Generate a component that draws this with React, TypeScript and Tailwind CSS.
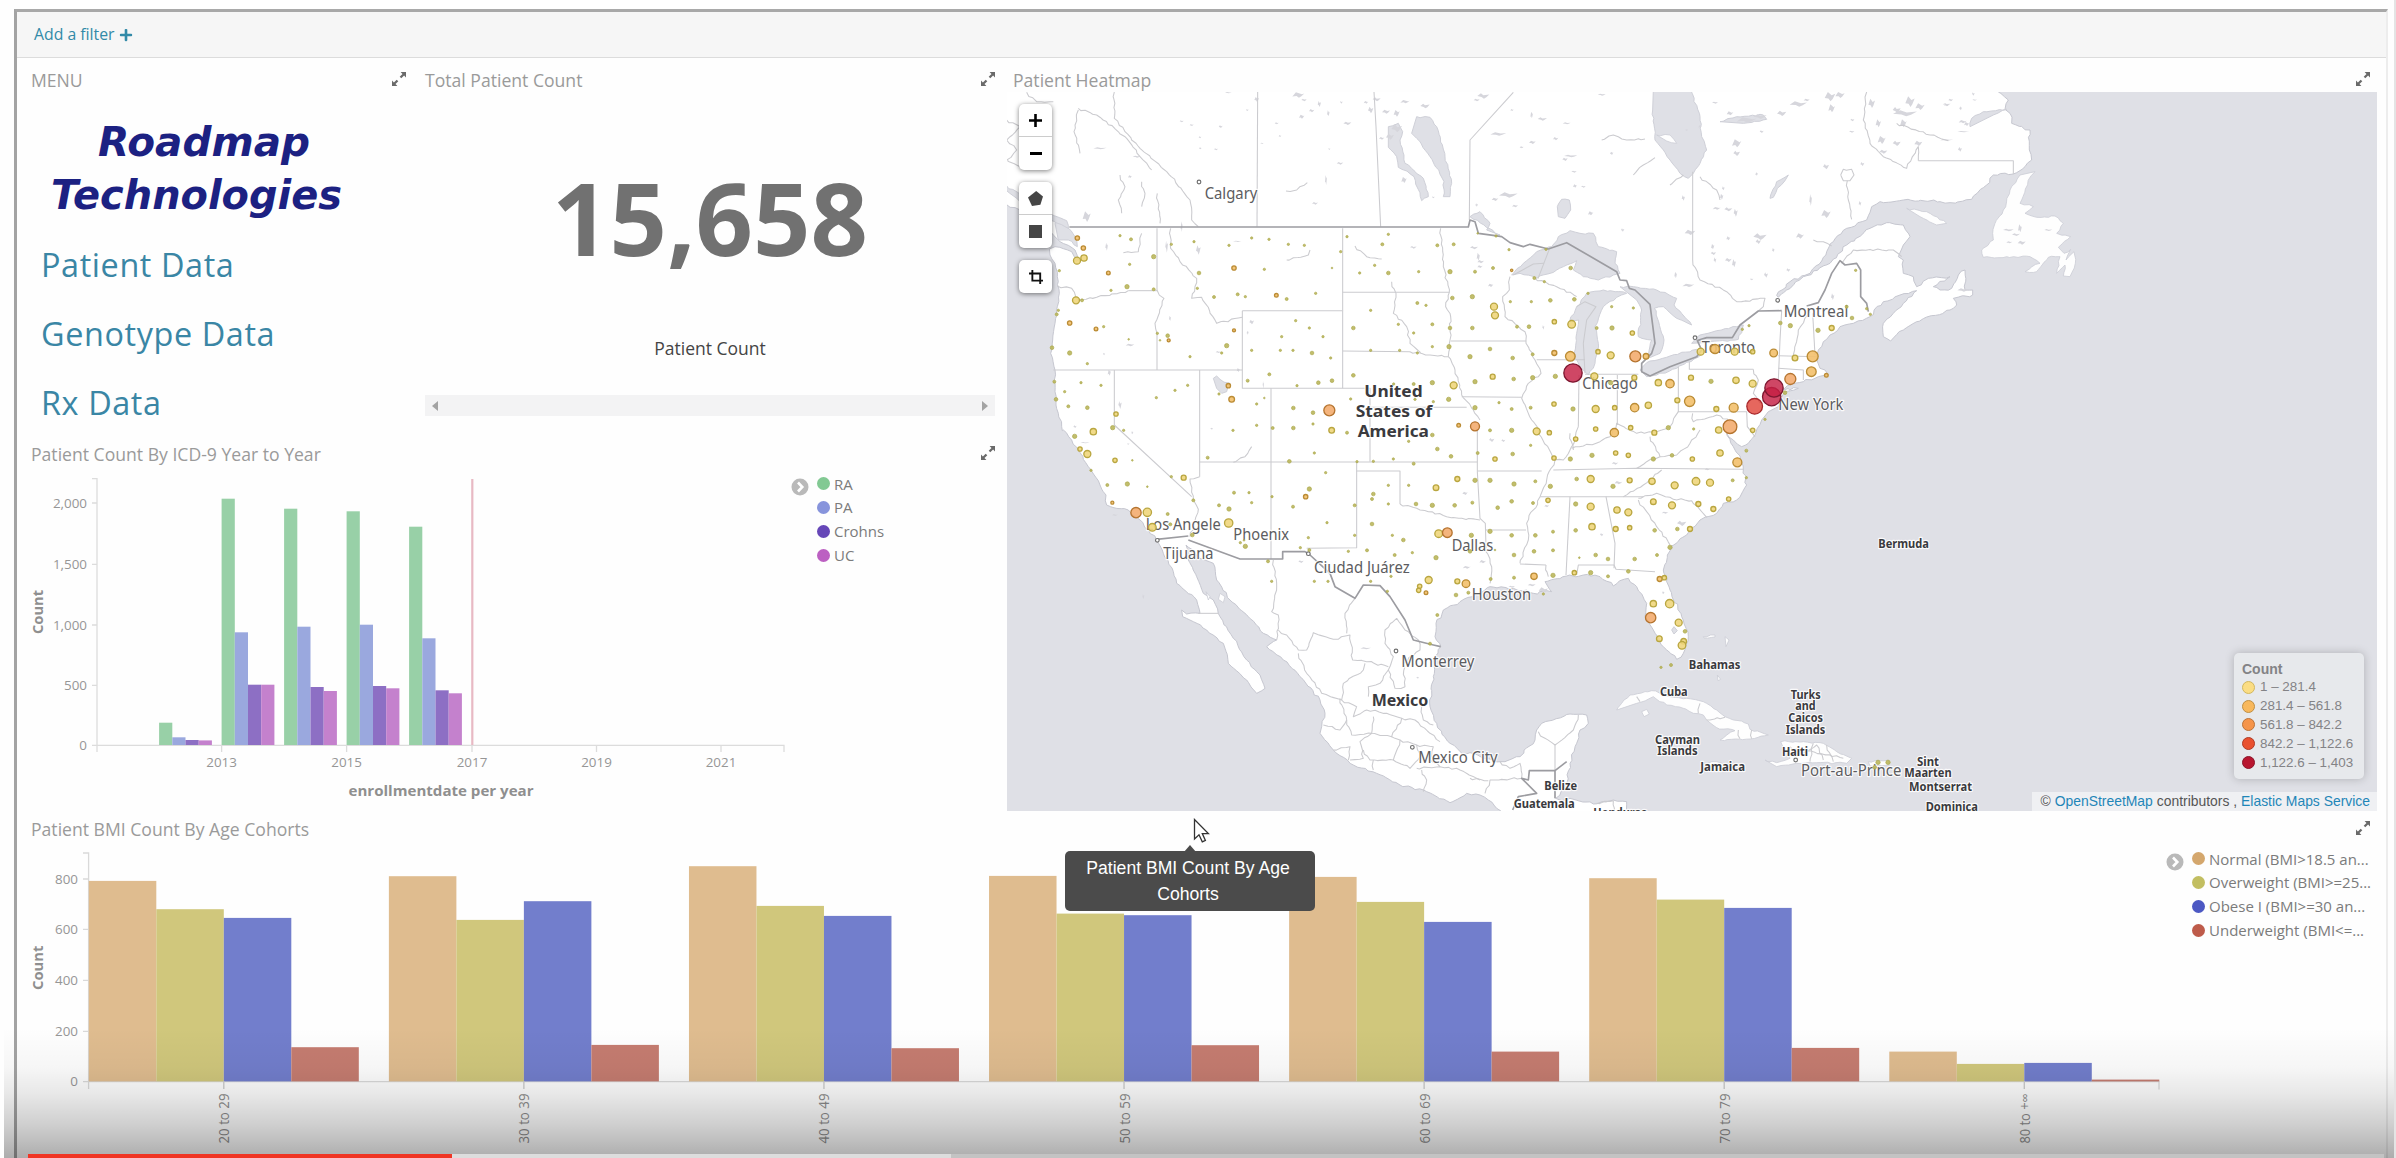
import React from "react";
import { FaPlus } from "react-icons/fa";

/* ---------- Geometry helpers ---------- */

// The map is digitised on five sheets, each with its own origin.
type Sheet = "NW" | "N" | "NE" | "SW" | "S" | "SE";
const ORIGIN: Record<Sheet, [number, number]> = {
  NW: [0, 0],
  N: [1410, 0],
  NE: [2820, 0],
  SW: [0, 1110],
  S: [1410, 1110],
  SE: [2700, 1110],
};

type Run = [Sheet, string];

const trace = (...runs: Run[]) =>
  "M" +
  runs
    .map(([sheet, points]) =>
      points
        .trim()
        .split(/\s+/)
        .map((p) => {
          const [x, y] = p.split(",").map(Number);
          return `${x + ORIGIN[sheet][0]} ${y + ORIGIN[sheet][1]}`;
        })
        .join("L")
    )
    .join("L");

const closed = (...runs: Run[]) => trace(...runs) + "Z";

// Adds a small, repeatable wobble so that natural borders look irregular.
const wiggle = (d: string, amount: number) => {
  const pts = d
    .replace(/[MZ]/g, "")
    .split("L")
    .map((p) => p.split(" ").map(Number));
  const out: string[] = [];
  let seed = 7;
  const rnd = () => {
    seed = (seed * 16807) % 2147483647;
    return (seed / 2147483647 - 0.5) * 2 * amount;
  };
  pts.forEach(([x, y], i) => {
    out.push(`${x} ${y}`);
    const next = pts[i + 1];
    if (!next) return;
    const len = Math.hypot(next[0] - x, next[1] - y);
    if (len > 900) return;
    const n = Math.floor(len / 11);
    for (let k = 1; k < n; k++) {
      const t = k / n;
      out.push(`${(x + (next[0] - x) * t + rnd()).toFixed(1)} ${(y + (next[1] - y) * t + rnd()).toFixed(1)}`);
    }
  });
  return "M" + out.join("L") + (d.endsWith("Z") ? "Z" : "");
};

/* ---------- Map data ---------- */

const OCEANS = [
  wiggle(
    trace(
      ["NW", "20,434 60,450 100,475 140,508 180,545 205,556 225,570 236,600 228,604 215,575 190,566 165,560 148,567 150,585 165,610 172,650 178,700 172,740 165,790 158,840 152,880 165,930 163,960 168,1020 175,1060 185,1100 187,1112"],
      ["SW", "190,0 215,30 235,60 265,110 300,165 318,195 320,225 385,240 420,270 445,300 470,330 490,370 520,425 530,460 590,510 600,550 560,552 545,540 548,560 580,575 620,600 670,640 685,700 740,750 770,790 795,775 780,735 740,690 700,625 660,560 640,510 610,490 590,440 565,390 558,345 600,385 640,400 650,450 690,510 745,560 790,610 830,630 800,650 850,690 900,740 960,810 975,850 965,890 960,910 1000,960 1060,1005 1130,1030 1200,1065 1280,1085 1350,1118 1400,1090 1440,1095"],
      ["S", "55,1110 80,1135 100,1150"]
    ),
    3
  ) + "L1510 2262L15 2262L15 434Z",
  wiggle(
    trace(
      ["S", "475,1150 470,1115 430,1110 370,1122 300,1105 275,1112 257,1105 275,1080 290,1060 300,1000 320,940 330,900 355,880 350,855 300,852 215,880 200,900 195,930 150,980 90,995 40,985 0,968"],
      ["SW", "1390,975 1350,940 1310,880 1290,830 1300,740 1300,690 1322,650 1305,620 1308,580 1330,540 1380,515 1440,490"],
      ["S", "60,470 130,475 190,490 245,485 225,455 290,438 340,435 390,440 430,468 475,445 500,470 530,520 525,560 550,600 580,650 620,688 640,670 655,620 635,560 600,480 580,420 600,350 650,315 690,270 740,250 760,220 800,210 830,165 820,120 812,90 790,50 770,10 790,30 815,50 835,40 860,0"],
      ["N", "862,1105 875,1080 895,1055 925,1040 940,1002 985,985 930,992 960,975 1000,965 1045,950 1075,945 1065,930 1050,925 1040,900 1045,870 1060,845 1080,825 1110,800 1150,790 1200,770 1240,725 1290,705 1340,692 1300,730 1270,760 1240,790 1240,830 1262,843 1300,810 1340,785 1440,750"],
      ["NE", "50,735 40,715 98,705 98,690 75,690 75,630 55,645 35,685 0,690"],
      ["N", "1390,680 1440,650 1375,655 1340,680 1330,650 1300,640 1300,600 1285,590 1300,555 1320,530 1300,495 1250,488 1200,505 1130,555 1080,610 1000,650 950,690 925,712 920,706 960,665 1020,640 1060,592 1090,545 1130,505 1190,480 1205,440 1230,425 1300,420 1410,425"],
      ["NE", "30,428 95,418 140,375 160,345 220,342 255,320 275,300 268,270 270,210 215,190 210,160 195,148 205,120 175,96"]
    ),
    4
  ) + "L3005 86L4140 86L4140 2262L1885 2262Z",
];

const LAKES = [
  closed(["N", "125,645 160,610 200,575 245,560 265,530 300,512 330,520 370,520 385,560 440,575 435,610 450,640 430,645 385,660 340,650 310,630 320,602 260,630 200,655 150,640"]),
  closed(["N", "340,930 312,890 320,820 326,780 300,780 320,740 350,700 400,690 470,700 440,712 400,740 375,800 385,850 375,910 355,945"]),
  closed(["N", "450,680 490,680 560,690 620,715 612,735 665,795 620,775 580,740 553,745 582,840 570,880 530,895 545,840 505,830 515,750 500,720"]),
  closed(["N", "510,930 530,908 600,888 680,868 692,885 620,925 560,945 530,950"]),
  closed(["N", "665,850 690,825 740,812 800,800 820,795 805,838 700,848"]),
  closed(["N", "550,90 662,90 690,170 695,230 710,270 690,310 670,340 655,355 630,340 600,300 555,240 548,150"]),
  closed(["NW", "1250,170 1290,172 1310,200 1335,290 1355,370 1350,410 1330,410 1332,365 1290,290 1250,235 1235,220"]),
  closed(["NW", "1165,200 1195,190 1208,215 1200,240 1215,310 1270,355 1285,410 1265,422 1242,350 1195,322 1190,290 1165,262"]),
  closed(["N", "262,440 275,418 298,420 302,450 285,475 265,470"]),
  closed(["NW", "640,955 650,948 660,958 690,970 680,995 665,1000 650,985"]),
  closed(["NW", "165,490 185,475 225,530 232,560 205,540 175,540"]),
  closed(["NW", "20,378 60,402 130,452 200,482 205,505 150,480 60,425 20,392"]),
  closed(["N", "90,525 0,470 30,455 60,490 50,510"]),
  closed(["N", "900,415 920,365 955,345 945,362 922,385 910,412"]),
  closed(["S", "605,600 612,590 622,602 612,612"]),
  closed(["NE", "90,200 95,175 130,155 200,148 160,165"]),
  closed(["N", "750,185 800,170 880,165 890,178 820,190"]),
];

const ISLANDS = [
  closed(["NE", "285,335 270,352 240,430 280,440 255,460 290,472 345,468 370,490 350,520 392,530 355,562 372,580 392,568 378,600 402,575 406,610 390,650 370,648 375,615 350,640 360,590 325,592 290,635 255,635 300,610 270,590 200,590 130,592 125,570 160,540 158,520 165,490 190,450 210,390 240,345"]),
  closed(["N", "1310,445 1370,455 1430,490 1400,495 1350,470"]),
  closed(["N", "560,225 600,225 620,250 590,243"]),
  closed(["S", "440,840 455,820 480,795 545,782 600,800 650,805 700,815 740,840 765,860 790,870 835,882 840,898 895,915 840,927 750,930 795,902 740,893 710,870 700,855 670,850 640,835 590,825 550,800 500,820"]),
  closed(["S", "885,990 920,998 960,985 932,935 1000,935 1060,940 1100,965 1145,985 1130,1000 1040,998 980,1000 920,1010"]),
  closed(["S", "1195,995 1255,990 1258,1005 1200,1008"]),
  closed(["S", "515,845 530,838 538,852 522,860"]),
  closed(["S", "700,1000 740,995 790,1010 740,1016"]),
  closed(["S", "700,620 735,615 735,621 702,624"]),
  closed(["S", "765,620 777,630 768,650"]),
  closed(["S", "742,735 752,748 744,752"]),
  closed(["SW", "660,490 675,500 670,518 655,508"]),
  closed(["SW", "618,485 630,500 625,510"]),
];

const STRAIGHT_BORDERS = [
  trace(["NW", "773,96 771,500"]),
  trace(["NW", "1122,96 1128,200 1142,500"]),
  trace(["N", "130,97 0,240 -2,480"]),
  trace(["NW", "471,505 471,690"]),
  trace(["NW", "471,820 471,930"]),
  trace(["NW", "385,692 471,692"]),
  trace(["NW", "160,930 727,930"]),
  trace(["NW", "727,752 1028,752 1028,985 727,985 727,752"]),
  trace(["NW", "1028,505 1028,752"]),
  trace(["NW", "1028,697 1348,697"]),
  trace(["NW", "1028,873 1230,875"]),
  trace(["NW", "1352,843 1440,843"], ["N", "168,843"]),
  trace(["NW", "813,985 813,1497"]),
  trace(["NW", "343,930 343,1095 575,1310"]),
  trace(["NW", "599,930 599,1250"]),
  trace(["NW", "1028,985 1110,985 1110,1205"]),
  trace(["NW", "1110,1042 1400,1042"]),
  trace(["NW", "599,1206 1432,1206"]),
  trace(["NW", "1385,1010 1565,1012"]),
  trace(["SW", "1070,96 1070,353 920,355"]),
  trace(["SW", "1070,123 1200,123 1200,222"]),
  trace(["N", "200,899 345,899"]),
  trace(["N", "327,945 325,1100"]),
  trace(["N", "442,945 442,1095"]),
  trace(["N", "345,943 505,943"]),
  trace(["N", "625,920 625,1055 830,1055 832,1100 855,1130"]),
  trace(["N", "658,905 658,928 850,928"]),
  trace(["S", "250,120 500,115 820,118"]),
  trace(["S", "22,123 215,123"]),
  trace(["S", "210,200 520,200"]),
  trace(["S", "300,200 288,435"]),
  trace(["S", "408,200 435,340 432,415"]),
  trace(["S", "320,435 325,405 432,405 438,418 555,425"]),
  trace(["S", "48,300 168,300"]),
  trace(["S", "22,0 22,125 30,265 46,280 48,350"]),
  trace(["S", "150,402 228,405"]),
  trace(["N", "935,752 930,840 925,960"]),
  trace(["N", "1028,760 1035,885"]),
  trace(["N", "925,887 1040,890"]),
  trace(["N", "925,925 1000,930 1000,960"]),
  trace(["N", "668,335 668,600"]),
  trace(["N", "1345,302 1440,302"], ["NE", "220,302 220,342"]),
  trace(["S", "255,945 255,1022"]),
  trace(["SW", "595,550 655,550"]),
  trace(["N", "204,656 240,562"]),
  trace(["N", "130,645 190,612 222,610"]),
  trace(["N", "345,940 340,850 350,780 378,740 345,725 320,740"]),
];

const NATURAL_BORDERS = [
  trace(["NW", "343,96 343,175 375,215 420,265 500,335 570,420 575,480 595,500"]),
  trace(["NW", "471,690 492,715 465,790 471,820"]),
  trace(["NW", "172,678 215,685 235,720 290,712 385,692"]),
  trace(["NW", "512,505 512,565 540,605 590,655 575,715 605,712 650,790 727,772"]),
  trace(["NW", "1230,875 1290,885 1345,890 1365,930 1385,1005 1420,1050 1440,1080"]),
  trace(["NW", "1322,505 1330,620 1348,697 1337,740 1352,770 1350,840 1345,890"]),
  trace(["NW", "1175,665 1188,700 1180,760 1220,800 1230,850 1262,878"]),
  trace(["SW", "599,140 570,147 580,210 595,238 570,320"]),
  trace(["SW", "1200,222 1250,235 1340,260 1440,270"]),
  trace(["N", "120,650 118,690 98,710 105,770 165,815 168,850 195,900 213,940 175,970 155,1015 185,1080 205,1110"], ["S", "205,10 255,90 230,150 210,200 170,280 175,330 150,400"]),
  trace(["S", "228,405 235,440"]),
  trace(["N", "195,655 260,680 320,710"]),
  trace(["N", "325,1100 315,1140"], ["S", "300,60 280,90 252,90"]),
  trace(["N", "625,1055 600,1100 560,1115 500,1120 440,1090 420,1130"], ["S", "390,35 340,48 305,55"]),
  trace(["S", "540,20 570,80 620,75 660,40 690,0"]),
  trace(["S", "570,80 530,95 500,115"]),
  trace(["S", "575,120 520,165 460,200"]),
  trace(["S", "505,205 560,190 610,208 665,212 710,262"]),
  trace(["S", "505,210 530,245 560,290 600,345"]),
  trace(["S", "48,350 65,410 60,460"]),
  trace(["N", "1020,755 985,810 970,885"]),
  trace(["N", "850,928 865,960 850,1000 870,1030"]),
  trace(["N", "668,1060 670,1085 740,1065 780,1085"]),
  trace(["N", "668,600 690,660 770,695 800,725 885,715 880,740 865,753"]),
  trace(["N", "1190,96 1180,180 1200,250 1240,290 1310,325 1345,260 1345,302"]),
  trace(["N", "1115,610 1150,570 1270,570 1295,590"]),
  trace(["N", "690,350 740,390 750,420"]),
  trace(["N", "1132,362 1135,420 1145,478"]),
  trace(["N", "1112,345 1120,328 1145,328 1152,345 1140,362 1120,362 1112,345"]),
  trace(["SW", "820,390 830,470 815,545 835,555 830,630"]),
  trace(["SW", "835,600 860,615 895,660 920,660 940,608 1000,628 1050,615 1058,690 1100,695 1165,710"]),
  trace(["SW", "1065,505 1035,550 1040,610"]),
  trace(["SW", "895,670 920,730 965,790 1025,810 1030,760 1090,720 1095,700"]),
  trace(["SW", "1190,565 1155,600 1155,640 1180,680 1165,720 1185,775 1215,770 1210,700 1260,660 1255,630 1215,600 1190,565"]),
  trace(["SW", "1165,720 1140,760 1105,770 1105,800"]),
  trace(["SW", "1020,805 1040,870 1020,900 970,885"]),
  trace(["SW", "1025,810 1070,830 1060,860 1100,840 1160,850 1205,865 1175,920 1115,910 1120,860"]),
  trace(["SW", "1040,870 1055,915 1115,910 1080,935 1090,985 1050,990"]),
  trace(["SW", "1000,960 1050,950 1045,990"]),
  trace(["SW", "1090,960 1110,990 1180,990 1200,930 1175,920"]),
  trace(["SW", "1205,865 1245,870 1290,910 1320,935"]),
  trace(["SW", "1200,930 1250,945 1260,980 1230,1015 1180,990"]),
  trace(["SW", "1120,990 1120,1020"]),
  trace(["SW", "1265,1020 1280,1050 1270,1085"]),
  trace(["SW", "1250,1015 1320,1010 1380,1020 1440,1050"]),
  trace(["SW", "1250,945 1300,950 1290,990 1320,1010"]),
  trace(["SW", "1265,830 1270,870 1300,885"]),
  trace(["S", "205,905 225,925 255,945 310,900 325,855"]),
  trace(["S", "90,995 120,1015 150,1000 155,1045 60,1050 45,1090"]),
  trace(["S", "0,1045 55,1052"]),
  trace(["S", "500,800 510,815"]),
  trace(["S", "690,820 685,850"]),
  trace(["S", "765,862 710,870"]),
  trace(["S", "805,900 810,926"]),
  trace(["S", "845,900 845,926"]),
  trace(["S", "960,950 1000,970 1040,945 1060,990"]),
  trace(["S", "1030,940 1020,995"]),
  trace(["S", "1070,945 1090,995"]),
  trace(["S", "1000,960 1120,985"]),
  trace(["S", "380,1120 430,1112 432,1145"]),
  trace(["NW", "235,145 290,165 380,235 420,290 455,330"]),
  trace(["NW", "235,150 222,215 240,280"]),
  trace(["NW", "360,345 375,380 355,420 365,460"]),
  trace(["NW", "425,365 435,400 425,440"]),
  trace(["NW", "472,400 480,490"]),
  trace(["NW", "858,393 890,390 922,368"]),
  trace(["NW", "20,180 60,200 20,240 50,270 20,300 60,320"]),
  trace(["NW", "80,97 110,125 160,125"]),
  trace(["NW", "860,600 925,585 930,570"]),
  trace(["NW", "1065,558 1100,590 1145,597"]),
  trace(["NW", "425,520 415,575 370,578"]),
  trace(["N", "490,345 520,315 555,293"]),
  trace(["N", "395,240 430,225 470,240 525,237"]),
  trace(["N", "600,375 640,345"]),
  trace(["N", "1030,540 1060,545 1085,558"]),
  trace(["N", "1280,190 1380,225 1435,242"]),
  trace(["S", "300,10 310,60"]),
  trace(["SW", "700,97 735,80 755,50"]),
];

const NATIONAL_BORDERS = [
  trace(
    ["NW", "208,501 1405,501 1410,480 1425,485 1435,520"],
    ["N", "75,527 95,530 120,548 160,560 180,553 235,567 290,548 440,635 450,660 470,662 478,685 495,690 540,733 555,850 545,880 515,910 515,935 540,948 600,920 680,890 695,870 682,842 710,833 787,833 810,795 865,753 935,752"]
  ),
  trace(["N", "1010,738 1045,728 1065,690 1085,640 1110,602 1125,615 1160,610 1172,630 1172,710 1190,730 1195,755"]),
  trace(["SW", "470,328 565,318"]),
  trace(["SW", "565,330 720,387 848,387 848,365 915,365 930,375 990,430 1005,470 1065,505 1090,465 1140,467 1170,500 1215,570 1240,630 1300,645 1322,650"]),
  trace(["S", "255,1105 255,1022 178,1022 175,1050 155,1045 200,1090 145,1100 128,1140"]),
  trace(["S", "255,1022 290,995"]),
];

// Small northern lakes: x, y, half width, half height.
const SPECKS: [Sheet, string][] = [
  ["NW", "545,184,6,3 575,195,6,3 662,200,6,4 600,232,4,3 601,265,4,3 648,268,6,3 742,150,4,3 770,118,7,7 685,98,10,2 895,105,18,8 912,120,8,4 958,132,5,9 935,152,8,5 985,160,4,9 905,170,8,6 1024,127,4,4 1042,190,12,5 830,190,6,3 840,228,4,3 786,250,5,2 988,267,3,3 1020,310,10,4 945,430,9,4 978,360,3,15 1098,127,7,4 1130,118,12,6 1112,150,8,10 1158,155,12,6 1190,160,9,10 1215,125,14,5 1275,138,14,7 1190,205,16,12 1170,230,12,9 1145,235,8,4 1212,360,8,9 1300,412,4,3 300,265,20,3 410,290,12,3 260,470,12,16 390,350,6,4 500,560,4,18 595,570,7,14 320,560,4,12 545,500,3,16 712,544,13,2 1240,562,10,4 755,786,7,7 743,818,3,6 390,855,13,4 328,938,5,9 360,1035,5,12 312,882,3,4 225,1100,5,4 510,775,3,8 715,930,5,6 790,975,2,12 655,876,8,3 635,1106,4,3 397,1118,3,5 1435,590,5,12 "],
  ["N", "40,108,18,8 20,120,9,4 85,222,24,5 126,150,5,3 185,165,4,10 217,177,14,5 290,190,12,3 257,236,8,5 187,247,10,5 155,262,6,3 302,288,20,4 285,298,8,5 312,335,8,3 425,280,5,5 315,378,6,5 340,380,7,3 115,405,28,8 135,438,9,4 75,418,10,5 362,460,8,6 458,510,5,5 20,435,4,5 32,605,10,5 30,620,8,4 62,676,8,5 12,563,12,5 395,104,12,3 735,128,9,3 780,160,10,6 830,180,30,8 870,170,20,7 935,160,14,8 985,132,26,8 1010,120,9,4 800,250,14,12 800,280,10,8 875,215,6,4 1080,110,16,14 1110,105,14,9 1085,145,10,12 1147,180,6,4 1145,215,8,3 1205,130,10,14 1225,190,8,12 1235,240,12,12 1280,150,12,9 1305,160,36,9 1320,125,14,16 1350,140,14,10 1300,190,10,12 1280,250,12,8 1240,275,12,6 1345,250,12,8 1430,135,8,4 860,342,4,5 1068,320,9,8 1177,312,6,6 1022,420,4,18 1068,462,14,12 990,528,12,8 870,530,20,10 865,545,8,7 760,385,4,6 755,410,5,9 740,445,12,4 775,448,12,6 797,458,6,12 660,517,16,8 775,535,6,6 728,560,5,8 730,580,8,5 735,600,4,8 775,600,10,6 792,610,6,12 910,570,4,6 888,645,6,8 955,630,6,5 640,414,5,8 617,645,4,10 655,676,18,5 845,658,5,3 220,802,3,7 1088,710,5,10 1170,430,4,7 690,200,5,4 650,210,4,3 "],
  ["NE", "20,133,12,3 32,120,7,4 62,145,4,6 68,185,12,5 80,192,8,6 100,102,4,5 104,120,7,2 60,268,6,7 20,240,20,2 70,215,18,2 205,510,16,4 228,524,12,4 245,548,12,6 208,547,9,3 240,505,6,12 325,510,12,3 70,690,18,5 "],
  ["SW", "903,395,8,4 1097,655,16,3 1253,743,4,3 1395,190,8,5 1400,412,12,4 255,38,14,2 430,500,3,8 345,255,9,3 385,42,4,2 "],
  ["S", "65,30,8,6 100,32,6,4 435,100,10,4 445,158,12,5 585,248,10,3 635,280,14,8 395,314,5,5 230,228,7,4 38,395,10,5 580,488,4,4 125,470,10,3 185,465,12,4 220,480,14,8 712,118,8,3 "],
];

const DOTS: [Sheet, string][] = [
  ["NW", "232,534,8,o 250,564,8,o 231,602,12 252,594,11 325,639,7,o 178,632,4 228,721,12 246,721,5 360,527,4 393,538,5 461,590,7 389,613,4 381,680,7 333,691,4 461,688,5 514,553,4 175,751,4 170,763,5 209,789,8,o 288,807,7,o 311,800,4 386,838,3 156,863,6 209,879,7 262,911,4 472,820,4 503,827,6 506,841,6,o 480,841,3 570,890,4 597,639,6 582,545,4 687,556,4 702,624,8,o 755,534,4 807,538,4 865,553,4 913,556,4 793,628,4 592,685,4 642,711,5 713,703,5 736,710,4 829,706,7,o 860,717,5 947,700,4 996,624,3 1022,575,4 702,811,6,o 680,857,7 665,879,4 887,782,4 928,804,4 845,830,4 969,830,4 755,871,4 841,871,4 879,871,4 936,879,6 992,894,4 808,943,5 743,962,5 891,977,4 955,968,6 996,962,6 685,977,8,o 695,1018,10,o 657,1002,4 163,965,5 243,968,4 303,976,4 563,976,4 525,991,4 194,995,4 168,1018,6 205,1039,5 262,1043,6 469,1013,4 348,1062,8 338,1103,7 371,1111,4 280,1115,11 793,1014,3 770,1032,4 770,1096,4 699,1111,4 818,1104,5 880,1044,6 939,1058,6 939,1092,4 880,1104,6 988,1051,18,O 995,1111,10 1052,1017,4 1060,946,6 1060,804,6 1112,751,4 1112,871,4 1199,871,4 1252,879,4 1195,793,4 1241,819,4 1297,793,5 1297,860,4 1252,729,5 1278,736,4 1350,804,6 1347,860,7 1357,714,6 1417,710,7 1417,804,6 1410,890,7 1350,635,7 1425,635,5 1256,635,4 1165,639,6 1124,616,4 1079,639,4 1147,553,5 1165,523,4 1041,530,4 1312,556,5 1361,553,5 1181,972,4 1241,972,5 1297,968,7 1361,976,12 1425,965,7 1245,1018,4 1300,1025,4 1346,1018,7 1425,1043,7 1376,1096,7,o 1425,1099,15,O"],
  ["N", "23,520,3 78,528,4 117,569,4 228,568,4 69,624,5 125,631,5,o 72,740,12 75,766,12 121,725,4 184,725,4 241,721,6 193,654,5 223,665,4 302,624,6 354,700,4 313,718,6 425,740,4 490,744,4 141,800,5 177,800,6 253,785,8 305,793,13 380,804,5 426,804,7 487,819,8 60,867,6 128,894,6 188,883,5 253,879,9,o 301,889,16,o 384,875,8 422,886,12 528,889,10,o 496,889,18,O 309,939,29,R 256,949,7 373,949,12 422,968,7 493,953,9 68,950,9 188,953,7 131,957,6 252,1032,8 87,1028,4 182,1043,5 125,1047,5 309,1047,7 377,1047,12 434,1043,8 494,1043,14,o 535,1036,11 565,968,11 600,971,14,o 622,1021,9 659,1024,17,o 663,953,9 723,964,7 798,961,11 848,971,12 739,1047,9 791,1043,15,o 746,1110,11 780,1100,22,O 848,1111,8 905,1010,29,R 912,984,29,R 854,1039,25,r 961,957,18,O 1024,935,16,o 1028,889,18,o 1069,946,7,o 975,894,10 911,879,13,o 848,875,8 794,875,12 735,867,15,o 692,875,12 817,808,4 837,797,4 931,789,6 961,797,7 1044,811,7 1085,804,9 1146,774,6 1201,763,4 1190,746,4 1130,740,5 1157,631,4 433,1118,14,o 377,1107,8 482,1103,8 553,1118,9 595,1103,7 671,1107,4 200,1114,12 238,1118,8 125,1111,7 60,1111,5 885,1078,4 945,998,6"],
  ["SW", "224,19,7 240,57,8 262,72,12 273,121,4 345,91,8 397,91,3 322,165,5 382,162,7 442,170,3 514,140,4 551,143,9 337,218,6,o 408,248,17,O 442,247,14 457,292,13 503,252,5 511,283,5 580,211,5 577,315,6 623,83,5 868,94,6 943,69,4 977,128,4 702,188,5 747,188,4 755,218,4 657,226,5 687,237,7 686,279,14 816,200,4 917,200,8,o 928,177,7 879,230,5 981,278,4 1064,226,5 1064,316,4 1116,282,6 1120,192,6 1116,207,5 1165,166,4 1165,222,4 1226,166,4 1248,222,6 1297,226,7 1364,226,6 1308,173,10 1372,147,9 1425,151,7 1417,218,5 1312,57,6 1353,79,6 1433,69,5 1041,8,5 1226,34,4 1297,15,6 1241,101,5 1180,87,4 1120,94,4 1071,95,4 1177,316,4 1210,330,6 1237,368,4 1101,361,5 1184,375,5 1045,364,4 925,323,4 901,353,4 928,360,5 804,394,5 815,454,4 943,454,4 984,454,4 1112,454,4 1173,439,4 1162,484,4 736,349,7 721,338,4 732,331,3 1316,311,13 1342,308,16,O 1414,316,7 1308,383,7 1410,364,6 1286,450,12 1259,469,8 1256,481,8 1278,488,7,o 1372,454,9 1398,461,13,o 1368,495,6 1405,488,5 1312,555,5 1290,641,5"],
  ["S", "317,27,8 182,46,4 75,87,8 128,72,6 252,84,8 301,87,7 366,76,7 437,69,8 475,76,8 550,87,7 606,76,6 667,87,8 750,69,11 802,97,15,o 829,62,5 60,151,7 132,162,7 196,154,5 241,169,7 320,147,6 362,147,12 429,169,7 479,151,9 546,154,11 614,166,12 678,154,13 720,158,12 788,151,5 829,143,4 776,207,8 730,237,9 685,222,9 606,226,12 550,215,10 475,247,12 441,240,11 362,230,12 317,222,7 234,211,8 189,219,5 125,214,6 83,233,6 60,304,7 125,316,6 196,316,6 249,305,5 317,301,6 366,290,11 437,297,9 479,293,8 554,301,6 622,297,6 660,297,9 600,352,7 561,375,5 494,387,6 475,424,6 414,387,6 377,375,6 328,383,3 249,361,5 192,364,6 132,375,6 132,443,5 192,439,11,o 249,436,7 313,428,8 362,428,7 414,439,5 569,447,9,o 583,443,8 550,521,11 599,521,14 542,563,17,O 626,578,12 645,604,6 568,626,10 641,634,10 636,646,13 573,712,4 603,705,5 220,492,4 62,447,5 1224,997,7 1254,997,7 1214,1012,6 75,360,3"],
];

const DOT_COLOURS: Record<string, [string, string]> = {
  y: ["#efd67c", "#b9a640"],
  o: ["#f3c06c", "#bb8c35"],
  O: ["#f2a460", "#b5742f"],
  r: ["#e0463a", "#a8282b"],
  R: ["#c41f43", "#7d1730"],
};

// Sheet, text, left edge, right edge, baseline, size, bold
type Label = [Sheet, string, number, number, number, number, boolean];
const LABELS: Label[] = [
  ["NW", "Calgary", 614, 772, 417, 46, false],
  ["NW", "United", 1093, 1268, 1012, 50, true],
  ["NW", "States of", 1067, 1297, 1072, 50, true],
  ["NW", "America", 1073, 1287, 1131, 50, true],
  ["N", "Toronto", 695, 855, 878, 46, false],
  ["N", "Montreal", 941, 1135, 770, 46, false],
  ["N", "Chicago", 337, 503, 987, 46, false],
  ["N", "New York", 925, 1120, 1049, 46, false],
  ["SW", "Los Angele", 437, 662, 300, 46, false],
  ["SW", "Phoenix", 700, 867, 330, 46, false],
  ["SW", "Tijuana", 490, 640, 388, 46, false],
  ["SW", "Ciudad Juárez", 942, 1229, 428, 46, false],
  ["SW", "Monterrey", 1204, 1423, 712, 46, false],
  ["SW", "Mexico", 1115, 1285, 828, 50, true],
  ["SW", "Mexico City", 1255, 1493, 1000, 46, false],
  ["SW", "Dallas", 1355, 1480, 363, 46, false],
  ["S", "Houston", 5, 183, 511, 46, false],
  ["S", "Bermuda", 1225, 1377, 353, 35, true],
  ["S", "Bahamas", 656, 811, 717, 35, true],
  ["S", "Cuba", 570, 653, 799, 35, true],
  ["S", "Turks", 962, 1052, 806, 35, true],
  ["S", "and", 976, 1037, 841, 35, true],
  ["S", "Caicos", 955, 1059, 876, 35, true],
  ["S", "Islands", 947, 1066, 911, 35, true],
  ["S", "Cayman", 555, 690, 941, 35, true],
  ["S", "Islands", 562, 683, 976, 35, true],
  ["S", "Haiti", 936, 1014, 977, 35, true],
  ["S", "Jamaica", 691, 825, 1022, 35, true],
  ["S", "Port-au-Prince", 993, 1294, 1038, 46, false],
  ["S", "Belize", 223, 321, 1080, 35, true],
  ["S", "Guatemala", 131, 314, 1133, 35, true],
  ["S", "Honduras", 370, 530, 1160, 35, true],
  ["SE", "Sint", 51, 117, 1008, 35, true],
  ["SE", "Maarten", 13, 155, 1042, 35, true],
  ["SE", "Montserrat", 27, 216, 1083, 35, true],
  ["SE", "Dominica", 77, 234, 1142, 35, true],
];

const CITIES: [Sheet, number, number][] = [
  ["NW", 597, 366],
  ["N", 923, 721],
  ["N", 675, 833],
  ["SW", 472, 331],
  ["SW", 925, 371],
  ["SW", 1188, 663],
  ["SW", 1237, 952],
  ["S", 977, 990],
];

/* ---------- Shared pieces ---------- */

function ExpandIcon() {
  return (
    <svg width="14" height="14" viewBox="0 0 14 14" className="shrink-0 text-[#6a6a6a]" fill="currentColor">
      <path d="M14 0v5.4L12.1 3.5 9.3 6.3 7.7 4.7 10.5 1.9 8.6 0zM0 14V8.6l1.9 1.9L4.7 7.7 6.3 9.3 3.5 12.1 5.4 14z" />
    </svg>
  );
}

function PanelHeader({ title, className = "" }: { title: string; className?: string }) {
  return (
    <div className={`flex shrink-0 items-center justify-between ${className}`}>
      <h2 className="mt-[2px] whitespace-nowrap text-[17.6px] leading-6 text-[#9a9a9a]">{title}</h2>
      <ExpandIcon />
    </div>
  );
}

function Legend({ items }: { items: { label: string; colour: string }[] }) {
  return (
    <div className="flex items-start">
      <svg width="18" height="18" viewBox="0 0 18 18" className="mt-[6px] shrink-0">
        <circle cx="9" cy="9" r="8.5" fill="#b9b9b9" />
        <path d="M7 4.5 11.3 9 7 13.5" fill="none" stroke="#fff" strokeWidth="2.6" />
      </svg>
      <ul className="ml-[8px] flex flex-col">
        {items.map((item) => (
          <li key={item.label} className="flex h-[23.8px] items-center gap-[4px] whitespace-nowrap text-[15px] text-[#7b7b7b]">
            <span className="size-[13px] shrink-0 rounded-full" style={{ backgroundColor: item.colour }} />
            {item.label}
          </li>
        ))}
      </ul>
    </div>
  );
}

/* ---------- Charts ---------- */

const YEAR_COLOURS = ["#98d0a7", "#9aa8de", "#8d6fc4", "#c481cd"];
const YEAR_BARS = [
  { x: 159.1, heights: [22.3, 7.7, 5, 4.6] },
  { x: 221.6, heights: [246.3, 112.7, 60.3, 60.3] },
  { x: 284.1, heights: [236.3, 118.3, 58, 54] },
  { x: 346.6, heights: [233.7, 120.3, 59, 56.7] },
  { x: 409.1, heights: [218.3, 106.7, 54.7, 51.7] },
];

function YearChart() {
  return (
    <svg width="773" height="341" viewBox="17 470 773 341" className="shrink-0">
      <g stroke="#dcdcdc" strokeWidth="1.3" fill="none">
        <path d="M92 478.7H97V752" />
        <path d="M92 745.3H784V752" />
        <path d="M92 503H97M92 564.3H97M92 625H97M92 685.3H97" />
        <path d="M221.6 745V752M346.6 745V752M472 745V752M596.5 745V752M721 745V752" />
      </g>
      {YEAR_BARS.map((group) =>
        group.heights.map((h, i) => (
          <rect key={`${group.x}-${i}`} x={group.x + i * 13.2} y={745 - h} width="13.2" height={h} fill={YEAR_COLOURS[i]} />
        ))
      )}
      <path d="M472.3 479V745" stroke="#e8b9c4" strokeWidth="2.2" />
      <g fontSize="13.4" fill="#969696" textAnchor="end">
        <text x="87" y="508">2,000</text>
        <text x="87" y="569.3">1,500</text>
        <text x="87" y="630">1,000</text>
        <text x="87" y="690.3">500</text>
        <text x="87" y="750">0</text>
      </g>
      <g fontSize="13.4" fill="#969696" textAnchor="middle">
        <text x="221.6" y="766.8">2013</text>
        <text x="346.6" y="766.8">2015</text>
        <text x="472" y="766.8">2017</text>
        <text x="596.5" y="766.8">2019</text>
        <text x="721" y="766.8">2021</text>
      </g>
      <g fontSize="14.5" fontWeight="700" fill="#8f8f8f">
        <text x="348.5" y="796" textLength="185" lengthAdjust="spacingAndGlyphs">enrollmentdate per year</text>
        <text transform="translate(43 634) rotate(-90)" textLength="44" lengthAdjust="spacingAndGlyphs">Count</text>
      </g>
    </svg>
  );
}

const AGE_COLOURS = ["#dfbc8f", "#d0c77c", "#727ecc", "#c57c70"];
const AGE_BARS = [
  { label: "20 to 29", heights: [201, 172.7, 164, 34.7] },
  { label: "30 to 39", heights: [205.7, 162, 180.7, 37] },
  { label: "40 to 49", heights: [215.7, 176, 166, 33.7] },
  { label: "50 to 59", heights: [206, 168.3, 166.7, 36.7] },
  { label: "60 to 69", heights: [205, 180, 160, 30.3] },
  { label: "70 to 79", heights: [203.7, 182.3, 174, 34] },
  { label: "80 to +∞", heights: [30.3, 18, 19, 2.3] },
];

function AgeChart() {
  return (
    <svg width="2145" height="314" viewBox="17 844 2145 314" className="shrink-0">
      <g stroke="#d9d9d9" strokeWidth="1.3" fill="none">
        <path d="M83 853H88.6V1089" />
        <path d="M83 1081.6H2159V1089.5" />
        <path d="M83 879H88M83 929.3H88M83 980.3H88M83 1031.3H88" />
      </g>
      {AGE_BARS.map((group, g) => {
        const left = 88.8 + g * 300.08;
        return (
          <g key={group.label}>
            {group.heights.map((h, i) => (
              <rect key={i} x={left + i * 67.5} y={1081.9 - h} width="67.5" height={h - 0.5} fill={AGE_COLOURS[i]} />
            ))}
            <path d={`M${left + 135} 1081V1089`} stroke="#c9c9c9" strokeWidth="1.3" />
            <text
              transform={`translate(${left + 140.5} 1143.5) rotate(-90)`}
              textLength="50"
              lengthAdjust="spacingAndGlyphs"
              fontSize="14"
              fill="#8c8c8c"
            >
              {group.label}
            </text>
          </g>
        );
      })}
      <g fontSize="13.4" fill="#969696" textAnchor="end">
        <text x="78" y="884">800</text>
        <text x="78" y="934.3">600</text>
        <text x="78" y="985.3">400</text>
        <text x="78" y="1036.3">200</text>
        <text x="78" y="1086.3">0</text>
      </g>
      <text transform="translate(43 990) rotate(-90)" textLength="44.5" lengthAdjust="spacingAndGlyphs" fontSize="14.5" fontWeight="700" fill="#8f8f8f">
        Count
      </text>
    </svg>
  );
}

/* ---------- Map ---------- */

function MapCanvas() {
  return (
    <svg width="1370" height="719" viewBox="21 96 4110 2157" className="block bg-white" fontFamily="'Noto Sans','Open Sans',sans-serif">
      <g fill="#dfe0e6" stroke="#c6c7d0" strokeWidth="3" strokeLinejoin="round">
        {OCEANS.map((d, i) => (
          <path key={i} d={d} />
        ))}
        {LAKES.map((d, i) => (
          <path key={i} d={wiggle(d, 3)} stroke="#cfd0d8" />
        ))}
      </g>
      <g fill="#fefefe" stroke="#cdced6" strokeWidth="2.5">
        {ISLANDS.map((d, i) => (
          <path key={i} d={wiggle(d, 3)} />
        ))}
      </g>
      <g fill="#d6d6dc">
        {SPECKS.map(([sheet, list]) =>
          list
            .trim()
            .split(" ")
            .map((s, i) => {
              const [x, y, w, h] = s.split(",").map(Number);
              const cx = x + ORIGIN[sheet][0];
              const cy = y + ORIGIN[sheet][1];
              const k = (i % 5) * 0.15;
              return (
                <path
                  key={`${sheet}${i}`}
                  d={`M${cx - w} ${cy + h * k}L${cx - w * 0.4} ${cy - h}L${cx + w * k} ${cy - h * 0.3}L${cx + w} ${cy - h * 0.6}L${cx + w * 0.5} ${cy + h * 0.5}L${cx + w * 0.1} ${cy + h}L${cx - w * 0.3} ${cy + h * 0.4}Z`}
                />
              );
            })
        )}
      </g>
      <g fill="none" stroke="#cbcbcf" strokeWidth="3.2" strokeLinejoin="round">
        {STRAIGHT_BORDERS.map((d, i) => (
          <path key={i} d={d} />
        ))}
        {NATURAL_BORDERS.map((d, i) => (
          <path key={`n${i}`} d={wiggle(d, 3.5)} />
        ))}
      </g>
      <g fill="none" stroke="#9c9ca1" strokeWidth="5" strokeLinejoin="round">
        {NATIONAL_BORDERS.map((d, i) => (
          <path key={i} d={d} />
        ))}
      </g>
      {CITIES.map(([sheet, x, y]) => (
        <circle key={`${x}-${y}`} cx={x + ORIGIN[sheet][0]} cy={y + ORIGIN[sheet][1]} r="5.5" fill="#fff" stroke="#6e6e6e" strokeWidth="3.5" />
      ))}
      {LABELS.map(([sheet, text, x1, x2, y, size, bold]) => (
        <text
          key={`${text}-${x1}`}
          x={x1 + ORIGIN[sheet][0]}
          y={y + ORIGIN[sheet][1]}
          fontSize={size}
          fontWeight={bold ? 700 : 400}
          fill={bold ? "#3a3a3e" : "#5c5c60"}
          stroke="#fff"
          strokeOpacity="0.85"
          strokeWidth="7"
          strokeLinejoin="round"
          paintOrder="stroke"
          textLength={x2 - x1}
          lengthAdjust="spacingAndGlyphs"
        >
          {text}
        </text>
      ))}
      {DOTS.map(([sheet, list]) =>
        list.split(" ").map((s) => {
          const [x, y, r, kind = "y"] = s.split(",");
          const [fill, stroke] = DOT_COLOURS[kind];
          const radius = Number(r);
          const small = radius <= 7 && kind === "y";
          return (
            <circle
              key={`${sheet}${s}`}
              cx={Number(x) + ORIGIN[sheet][0]}
              cy={Number(y) + ORIGIN[sheet][1]}
              r={small ? radius - 0.5 : radius - 1.5}
              fill={small ? "#bab65c" : fill}
              fillOpacity={kind === "y" || kind === "o" ? 0.9 : 0.82}
              stroke={small ? "#aba84a" : stroke}
              strokeWidth={small ? 2 : 4}
            />
          );
        })
      )}
    </svg>
  );
}

const MAP_BUTTON = "flex h-[33px] w-[33px] items-center justify-center";
const MAP_GROUP = "flex flex-col rounded-[5px] bg-white shadow-[0_1px_5px_rgba(0,0,0,0.5)]";

function MapControls() {
  return (
    <div className="absolute left-[12px] top-[12px] flex flex-col gap-[12px]">
      <div className={MAP_GROUP}>
        <span className={`${MAP_BUTTON} border-b border-[#ccc]`}>
          <svg width="13" height="13" viewBox="0 0 13 13" fill="#000">
            <path d="M5.2 0h2.6v5.2H13v2.6H7.8V13H5.2V7.8H0V5.2h5.2z" />
          </svg>
        </span>
        <span className={MAP_BUTTON}>
          <svg width="12" height="3" viewBox="0 0 12 3" fill="#000">
            <path d="M0 0h12v3H0z" />
          </svg>
        </span>
      </div>
      <div className={MAP_GROUP}>
        <span className={`${MAP_BUTTON} border-b border-[#ccc]`}>
          <svg width="15" height="15" viewBox="0 0 15 15" fill="#454545">
            <path d="M8.2 0 15 5.4 12.4 13.8 4 15 0 6.4z" />
          </svg>
        </span>
        <span className={MAP_BUTTON}>
          <span className="size-[13px] bg-[#454545]" />
        </span>
      </div>
      <div className={MAP_GROUP}>
        <span className={MAP_BUTTON}>
          <svg width="14" height="14" viewBox="0 0 15 15" fill="none" stroke="#111" strokeWidth="2">
            <path d="M0 3.8H12V15M3.6 0V11.4H15" />
          </svg>
        </span>
      </div>
    </div>
  );
}

const RANGES = [
  { label: "1 – 281.4", fill: "#fbdd83", ring: "#d2b75e" },
  { label: "281.4 – 561.8", fill: "#f8b85c", ring: "#c08f42" },
  { label: "561.8 – 842.2", fill: "#f5944a", ring: "#bb7238" },
  { label: "842.2 – 1,122.6", fill: "#e9512f", ring: "#b03a24" },
  { label: "1,122.6 – 1,403", fill: "#b8162f", ring: "#8b1428" },
];

function MapLegend() {
  return (
    <div className="absolute bottom-[32px] right-[13px] h-[126px] w-[130px] rounded-[5px] bg-[#e7e9ec] pl-[8px] pt-[7px] font-['Liberation_Sans',Arial,sans-serif] text-[13.4px] text-[#838386] shadow-[0_0_10px_rgba(0,0,0,0.22)]">
      <div className="h-[18px] text-[14px] font-bold leading-[18px]">Count</div>
      {RANGES.map((range) => (
        <div key={range.label} className="flex h-[18.8px] items-center gap-[5px] whitespace-nowrap">
          <span className="size-[13px] shrink-0 rounded-full border" style={{ backgroundColor: range.fill, borderColor: range.ring }} />
          {range.label}
        </div>
      ))}
    </div>
  );
}

/* ---------- Page ---------- */

export default function App() {
  return (
    <div className="relative h-[1158px] w-[2396px] overflow-hidden border-r-2 border-[#e4e4e4] bg-[#fefefe] pl-[14px] pr-[6px] pt-[9px] font-['Open_Sans',sans-serif]">
      <div className="flex h-full flex-col border-l-[3px] border-r-2 border-t-[3px] border-l-[#a3a3a3] border-r-[#ededed] border-t-[#a8a8a8]">
        <div className="flex h-[46px] shrink-0 items-center gap-[4px] border-b border-[#dcdcdc] bg-[#f6f6f6] pl-[17px] text-[#328aa8]">
          <span className="text-[15.8px]">Add a filter</span>
          <FaPlus size={14} />
        </div>

        <div className="flex h-[753px] shrink-0">
          <div className="flex w-[990px] shrink-0 flex-col">
            <div className="flex h-[375px] shrink-0">
              <section className="flex w-[394px] shrink-0 flex-col pl-[14px] pr-[5px]">
                <PanelHeader title="MENU" className="h-[42px]" />
                <svg width="330" height="125" viewBox="31 100 330 125" className="block shrink-0" fontFamily="'DejaVu Sans',sans-serif" fontWeight="700" fontStyle="italic" fill="#1c2182">
                  <text x="98" y="156" fontSize="41" textLength="212" lengthAdjust="spacingAndGlyphs">Roadmap</text>
                  <text x="51" y="208.5" fontSize="41" textLength="291" lengthAdjust="spacingAndGlyphs">Technologies</text>
                </svg>
                <nav className="flex shrink-0 flex-col pl-[10px] pt-[5px] text-[32.4px] leading-[69px] tracking-[0.6px] text-[#3a86a5]">
                  <a>Patient Data</a>
                  <a>Genotype Data</a>
                  <a>Rx Data</a>
                </nav>
              </section>

              <section className="flex flex-1 flex-col pl-[14px] pr-[12px]">
                <PanelHeader title="Total Patient Count" className="h-[42px]" />
                <div className="flex flex-1 flex-col items-center">
                  <div className="mt-[49px] text-[100.5px] font-bold leading-[136px] text-[#717171]">15,658</div>
                  <div className="mt-[50px] text-[17.5px] leading-[26px] text-[#444]">Patient Count</div>
                </div>
                <div className="mb-[17px] flex h-[21px] items-center justify-between bg-[#f3f3f4] px-[7px]">
                  <svg width="6" height="10" viewBox="0 0 6 10" fill="#a3a3a3">
                    <path d="M6 0v10L0 5z" />
                  </svg>
                  <svg width="6" height="10" viewBox="0 0 6 10" fill="#a3a3a3">
                    <path d="M0 0v10l6-5z" />
                  </svg>
                </div>
              </section>
            </div>

            <section className="flex h-[378px] shrink-0 flex-col">
              <PanelHeader title="Patient Count By ICD-9 Year to Year" className="h-[37px] pl-[14px] pr-[12px] pt-[3px]" />
              <div className="flex">
                <YearChart />
                <div className="pl-[1px] pt-[2px]">
                  <Legend
                    items={[
                      { label: "RA", colour: "#82c993" },
                      { label: "PA", colour: "#8794dc" },
                      { label: "Crohns", colour: "#6647b8" },
                      { label: "UC", colour: "#bc60c2" },
                    ]}
                  />
                </div>
              </div>
            </section>
          </div>

          <section className="flex w-[1370px] shrink-0 flex-col">
            <PanelHeader title="Patient Heatmap" className="h-[34px] pl-[6px] pr-[7px] pt-[7px]" />
            <div className="relative h-[719px] overflow-hidden">
              <MapCanvas />
              <MapControls />
              <MapLegend />
              <div className="absolute bottom-0 right-0 flex h-[19px] items-center gap-[4px] whitespace-pre bg-white/50 pl-[8px] pr-[7px] font-['Liberation_Sans',Arial,sans-serif] text-[13.9px] text-[#555]">
                <span>©</span>
                <span className="text-[#1f86b8]">OpenStreetMap</span>
                <span>contributors ,</span>
                <span className="text-[#1f86b8]">Elastic Maps Service</span>
              </div>
            </div>
          </section>
        </div>

        <section className="flex flex-1 flex-col">
          <PanelHeader title="Patient BMI Count By Age Cohorts" className="h-[33px] pl-[14px] pr-[16px]" />
          <div className="flex">
            <AgeChart />
            <div className="pl-[4px] pt-[3px]">
              <Legend
                items={[
                  { label: "Normal (BMI>18.5 an...", colour: "#d4a76d" },
                  { label: "Overweight (BMI>=25...", colour: "#c2be61" },
                  { label: "Obese I (BMI>=30 an...", colour: "#4c58c3" },
                  { label: "Underweight (BMI<=...", colour: "#be5b4a" },
                ]}
              />
            </div>
          </div>
        </section>
      </div>

      <div className="absolute left-[1065px] top-[851px] flex h-[60px] w-[250px] items-center justify-center rounded-[5px] bg-[#4b4b4b] text-center font-['Liberation_Sans',Arial,sans-serif] text-[17.6px] leading-[26px] text-white">
        <svg width="12" height="7" viewBox="0 0 12 7" className="absolute -top-[6px] left-[119px]" fill="#4b4b4b">
          <path d="M6 0 12 7H0z" />
        </svg>
        <span className="-ml-[4px]">
          Patient BMI Count By Age
          <br />
          Cohorts
        </span>
      </div>

      <svg width="17" height="25" viewBox="0 0 17 25" className="absolute left-[1193px] top-[818px]">
        <path d="M1.5 1.5V21L6 16.8 9.3 23.8 12.4 22.4 9.3 15.6H15.4z" fill="#fff" stroke="#333" strokeWidth="1.3" />
      </svg>

      <div className="absolute bottom-0 left-[4px] right-0 h-[130px] bg-[linear-gradient(to_bottom,rgba(0,0,0,0)_0%,rgba(0,0,0,0.03)_30%,rgba(0,0,0,0.085)_50%,rgba(0,0,0,0.19)_75%,rgba(0,0,0,0.32)_100%)]" />
      <div className="absolute bottom-0 left-[28px] right-[10px] flex h-[4px] bg-[#c3c3c3]">
        <div className="w-[424px] bg-[#f03524]" />
        <div className="w-[499px] bg-[#dddddd]" />
      </div>
    </div>
  );
}
